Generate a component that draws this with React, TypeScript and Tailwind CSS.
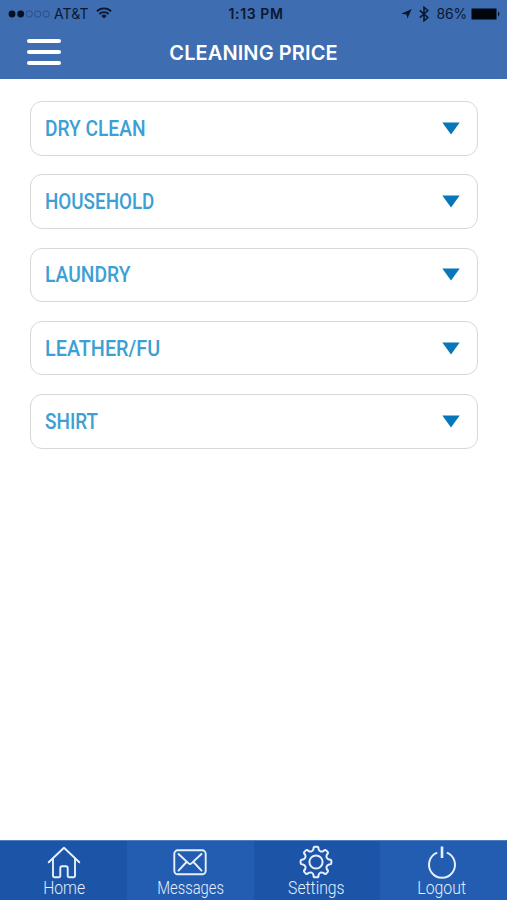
import React from 'react';
import clsx from 'clsx';

interface Category {
  name: string;
  scale: string;
}

const CATEGORIES: Category[] = [
  { name: 'DRY CLEAN', scale: 'scale-x-[0.87]' },
  { name: 'HOUSEHOLD', scale: 'scale-x-[0.855]' },
  { name: 'LAUNDRY', scale: 'scale-x-[0.875]' },
  { name: 'LEATHER/FU', scale: 'scale-x-[0.9]' },
  { name: 'SHIRT', scale: 'scale-x-[0.86]' },
];

// Eight rounded teeth around the centre of a 34x34 box
const gearPath = () => {
  const point = (r: number, deg: number) => {
    const a = (deg * Math.PI) / 180;
    return `${(17 + r * Math.sin(a)).toFixed(2)} ${(17 - r * Math.cos(a)).toFixed(2)}`;
  };
  let d = `M${point(13.2, -11)}`;
  for (let i = 0; i < 8; i++) {
    const c = i * 45;
    d += `Q${point(15.4, c - 10)} ${point(15.4, c - 4)}L${point(15.4, c + 4)}`;
    d += `Q${point(15.4, c + 10)} ${point(13.2, c + 11)}`;
    d += `C${point(11.2, c + 16)} ${point(11.2, c + 29)} ${point(13.2, c + 34)}`;
  }
  return `${d}Z`;
};

const HomeIcon = () => (
  <svg width="34" height="34" viewBox="0 0 34 34" fill="none" stroke="currentColor" strokeWidth="1.9" strokeLinecap="round" strokeLinejoin="round">
    <path d="M1.7 17.3 17 2.7 32.3 17.3" />
    <path d="M6 14V31q0 1.2 1.2 1.2h4.9q1.2 0 1.2-1.2v-8q0-1.7 1.7-1.7h4q1.7 0 1.7 1.7v8q0 1.2 1.2 1.2h4.9q1.2 0 1.2-1.2V14" />
  </svg>
);

const MessagesIcon = () => (
  <svg width="34" height="34" viewBox="0 0 34 34" fill="none" stroke="currentColor" strokeWidth="1.9" strokeLinecap="round" strokeLinejoin="round">
    <rect x="1.3" y="5.3" width="31.4" height="24" rx="3.5" />
    <path d="M5.5 9 15.6 18.4q1.4 1.3 2.8 0L28.5 9M5.5 25.6l8-8.6M28.5 25.6l-8-8.6" />
  </svg>
);

const SettingsIcon = () => (
  <svg width="34" height="34" viewBox="0 0 34 34" fill="none" stroke="currentColor" strokeWidth="2" strokeLinejoin="round">
    <path d={gearPath()} />
    <circle cx="17" cy="17" r="6.6" />
  </svg>
);

const LogoutIcon = () => (
  <svg width="34" height="34" viewBox="0 0 34 34" fill="none" stroke="currentColor" strokeWidth="2">
    <path d="M12.2 7.6a13 13 0 1 0 9.6 0" />
    <path d="M17 1.5V13" strokeWidth="2.6" />
  </svg>
);

const TABS = [
  { label: 'Home', icon: HomeIcon, scale: 'scale-x-[0.87]', inset: 'pl-px' },
  { label: 'Messages', icon: MessagesIcon, scale: 'scale-x-[0.82]', inset: '' },
  { label: 'Settings', icon: SettingsIcon, scale: 'scale-x-[0.875]', inset: 'pr-[2px]' },
  { label: 'Logout', icon: LogoutIcon, scale: 'scale-x-[0.88]', inset: 'pr-[4px]' },
];

const StatusBar = () => (
  <div className="grid h-[27px] grid-cols-[1fr_auto_1fr] items-center pr-[5px] pl-[8px] text-[#0b1830]">
    <div className="flex items-center">
      <svg width="42" height="8" viewBox="0 0 42 8" className="mr-[4px]">
        <circle cx="4" cy="4" r="3.4" fill="#071020" />
        <circle cx="12.7" cy="4" r="3.4" fill="#071020" />
        <g fill="none" stroke="#24477c" strokeWidth="0.8">
          <circle cx="21.2" cy="4" r="3.2" />
          <circle cx="29.7" cy="4" r="3.2" />
          <circle cx="38.2" cy="4" r="3.2" />
        </g>
      </svg>
      <span className="text-[14px] tracking-[0.1px]">AT&amp;T</span>
      <svg width="16" height="12" viewBox="0 0 16 12" className="-mt-px ml-[7px]" fill="none" stroke="currentColor" strokeWidth="1.9">
        <path d="M.9 4.3a10 10 0 0 1 14.2 0M3.4 7a6.5 6.5 0 0 1 9.2 0" />
        <path d="M8 11.5 5.4 8.9a3.7 3.7 0 0 1 5.2 0z" fill="currentColor" stroke="none" />
      </svg>
    </div>
    <span className="pl-[2px] text-[14px] font-semibold tracking-[0.6px]">1:13 PM</span>
    <div className="flex items-center justify-end">
      <svg width="11" height="10" viewBox="0 0 11 10" fill="currentColor">
        <path d="M10.7.1 6.4 9.6 5.5 5.4.2 4.8z" />
      </svg>
      <svg width="10" height="16" viewBox="0 0 10 16" className="ml-[7px]" fill="none" stroke="currentColor" strokeWidth="1.6">
        <path d="m.8 4.3 8 7.2L5 14.8V1.2l3.8 3.3-8 7.2" />
      </svg>
      <span className="ml-[8px] text-[14px] tracking-[-0.2px]">86%</span>
      <svg width="31" height="12" viewBox="0 0 31 12" className="ml-[4px]">
        <rect x="0.5" y="0.5" width="25" height="11" rx="1" fill="#02060d" stroke="#1c3966" strokeWidth="0.8" />
        <path d="M27 3.3q3 2.7 0 5.4z" fill="#0b1830" />
      </svg>
    </div>
  </div>
);

export default function App() {
  return (
    <div className="flex h-[900px] w-[507px] flex-col overflow-hidden bg-white font-['Inter',sans-serif]">
      <header className="h-[79px] shrink-0 bg-[#3e6db1]">
        <StatusBar />
        <div className="grid h-[50px] grid-cols-[1fr_auto_1fr] items-center px-[27px] text-white">
          <button className="flex w-[34px] flex-col gap-[7px]" aria-label="Menu">
            <span className="h-[4px] rounded-full bg-white" />
            <span className="h-[4px] rounded-full bg-white" />
            <span className="h-[4px] rounded-full bg-white" />
          </button>
          <h1 className="pt-px text-[20px] font-semibold tracking-[0.1px]">CLEANING PRICE</h1>
        </div>
      </header>

      <main className="flex flex-1 flex-col gap-[18.8px] pt-[22px] pr-[29px] pl-[30px]">
        {CATEGORIES.map((category) => (
          <button
            key={category.name}
            className="flex h-[54.5px] shrink-0 items-center justify-between rounded-[12px] border-[1.5px] border-[#d8d8da] pr-[17px] pl-[14px]"
          >
            <span
              className={clsx(
                "origin-left font-['Roboto',sans-serif] text-[22px] font-medium text-[#3c9fd5]",
                category.scale,
              )}
            >
              {category.name}
            </span>
            <svg width="18" height="13" viewBox="0 0 18 13" fill="#0877b9">
              <path d="M.3.4h17.4L9 12.6z" />
            </svg>
          </button>
        ))}
      </main>

      <nav className="grid h-[60px] shrink-0 grid-cols-4 border-t border-[#4d7fc0]">
        {TABS.map(({ label, icon: Icon, scale, inset }, i) => (
          <button
            key={label}
            className={clsx(
              'flex flex-col items-center pt-[4px] text-[#e6effb]',
              i % 2 === 0 ? 'bg-[#1c55a7]' : 'bg-[#235db1]',
              inset,
            )}
          >
            <Icon />
            <span className={clsx("-mt-px font-['Roboto',sans-serif] text-[18px] leading-[20px] font-light", scale)}>
              {label}
            </span>
          </button>
        ))}
      </nav>
    </div>
  );
}
